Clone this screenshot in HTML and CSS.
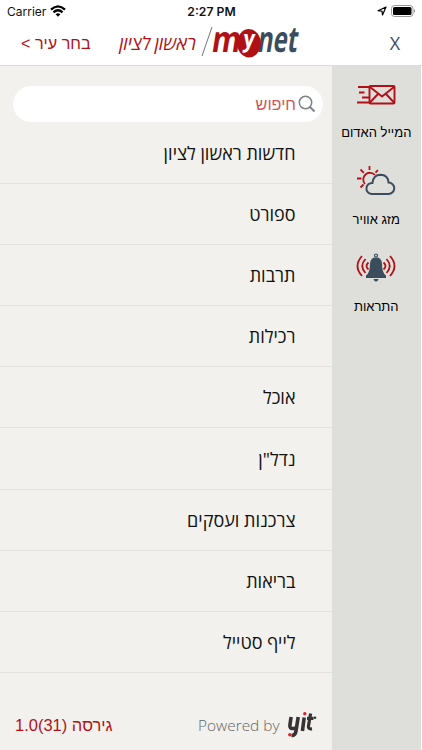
FILE: index.html
```html
<!DOCTYPE html>
<html lang="he" dir="rtl">
<head>
    <meta charset="UTF-8">
    <meta name="viewport" content="width=device-width, initial-scale=1.0">
    <title>mynet</title>
    <link rel="stylesheet" href="styles.css">
</head>
<body>
    <div class="status-bar" dir="ltr">
        <div class="carrier">
            <span>Carrier</span>
            <svg width="16" height="12" viewBox="0 0 16 12" fill="none" stroke="#000" stroke-width="2.3">
                <path d="M1 4.6Q8-1.8 15 4.6"/>
                <path d="M3.5 7.3Q8 3.3 12.5 7.3"/>
                <path d="M5.6 9.2Q8 7.2 10.4 9.2L8 11.7Z" fill="#000" stroke="none"/>
            </svg>
        </div>
        <div class="time">2:27 PM</div>
        <div class="indicators">
            <svg width="10" height="10" viewBox="0 0 10 10" fill="none" stroke="#000" stroke-width="1.2" stroke-linejoin="round">
                <path d="M9 1L1 4.7L5 5.1L5.5 9Z"/>
            </svg>
            <svg width="25" height="12" viewBox="0 0 25 12">
                <rect x=".5" y=".5" width="21.5" height="11" rx="3" fill="#fff" stroke="#999"/>
                <rect x="2" y="2" width="18.5" height="8" rx="1.5"/>
                <path d="M23 4Q25.3 6 23 8Z" fill="#999"/>
            </svg>
        </div>
    </div>

    <div class="header">
        <button class="close">X</button>
        <svg class="logo" width="98" height="44" viewBox="0 -4 98 44" direction="ltr">
            <path d="M1 30L11 1" stroke="#777" stroke-width="1"/>
            <g class="logo-text">
                <text transform="translate(9.5 26.2) skewX(-9)" fill="#b01116" textLength="29" lengthAdjust="spacingAndGlyphs">m</text>
                <text transform="translate(55.5 26.2) skewX(-9)" fill="#3b4d5d" textLength="40" lengthAdjust="spacingAndGlyphs">net</text>
                <ellipse cx="48" cy="17.3" rx="11.8" ry="14.2" fill="#b01116"/>
                <text class="logo-y" transform="translate(41.5 21.3) skewX(-7)" fill="#fff" textLength="11.5" lengthAdjust="spacingAndGlyphs">y</text>
            </g>
        </svg>
        <div class="city">ראשון לציון</div>
        <div class="choose-city">בחר עיר &gt;</div>
    </div>

    <div class="content">
        <div class="sidebar">
            <div class="side-item">
                <svg width="40" height="32" viewBox="0 0 40 32" fill="none" stroke="#b01116" stroke-width="1.9">
                    <rect x="13.5" y="7" width="25" height="17.5" rx="1"/>
                    <path d="M14 8L26 17.5L38 8M14 23.5L22 15M38 23.5L30 15M2 8H13M3 13.5H8.5M6 18.5H13M1 23.5H13"/>
                </svg>
                <span>המייל האדום</span>
            </div>
            <div class="side-item">
                <svg width="40" height="32" viewBox="0 0 40 32" fill="none" stroke-width="1.8">
                    <path stroke="#b01116" d="M9 18A6.3 6.3 0 1 1 19 9M13.5 4V0M1 12.5H5.5M4.5 3.5L7.8 6.8M22 4L19.5 6.7M4.5 21.5L7.5 18.5"/>
                    <path stroke="#3b4d5d" stroke-width="2" d="M15.5 28H32.5A5.7 5.7 0 0 0 32.5 16.5Q32 9 24.5 8.8Q17.5 8.8 16.4 17A5.5 5.5 0 0 0 15.5 28Z"/>
                </svg>
                <span>מזג אוויר</span>
            </div>
            <div class="side-item">
                <svg width="40" height="32" viewBox="0 0 40 32" fill="none" stroke="#b01116" stroke-width="1.8">
                    <path d="M6 3Q-3 13 6 23M9.5 6Q3 13 9.5 20M12.5 9.5Q8.5 13 12.5 16.5M34 3Q43 13 34 23M30.5 6Q37 13 30.5 20M27.5 9.5Q31.5 13 27.5 16.5"/>
                    <circle cx="20" cy="2.5" r="1.5" stroke="#3b4d5d" stroke-width="1.2"/>
                    <path fill="#3b4d5d" stroke="none" d="M18 4.5H22Q26 6 26 11Q26 20 30 22.5V25H10V22.5Q14 20 14 11Q14 6 18 4.5ZM17.5 26H22.5Q22 28.5 20 28.5T17.5 26Z"/>
                </svg>
                <span>התראות</span>
            </div>
        </div>

        <div class="main">
            <div class="search">
                <svg width="18" height="18" viewBox="0 0 18 18" fill="none" stroke="#7c8288" stroke-width="1.5">
                    <circle cx="7.5" cy="7.5" r="6.2"/>
                    <path d="M12 12L16.5 16.5" stroke-width="2"/>
                </svg>
                <span>חיפוש</span>
            </div>
            <ul class="menu">
                <li>חדשות ראשון לציון</li>
                <li>ספורט</li>
                <li>תרבות</li>
                <li>רכילות</li>
                <li>אוכל</li>
                <li>נדל"ן</li>
                <li>צרכנות ועסקים</li>
                <li>בריאות</li>
                <li>לייף סטייל</li>
            </ul>
            <div class="footer">
                <div class="powered" dir="ltr">
                    <span>Powered by</span>
                    <svg width="30" height="26" viewBox="0 0 30 26">
                        <g fill="none" stroke="#373234" stroke-width="3.6">
                            <path d="M4.1 5L2.9 13Q2.5 17 6 16.5L9.5 16M11.2 5L9 19Q8.4 23.5 4.5 23.5"/>
                            <path d="M17.2 5.5L15.4 19"/>
                            <path d="M23.6 1.5L21.4 14.5Q21 17.3 25 16.8M20 6.3H26.5" stroke-width="3.2"/>
                        </g>
                        <circle cx="17.8" cy="1.8" r="1.7" fill="#d9232e"/>
                        <circle cx="2.8" cy="22.8" r="1.7" fill="#d9232e"/>
                        <circle cx="28" cy="5.8" r="1.3" fill="#373234"/>
                    </svg>
                </div>
                <div class="version">גירסה <span dir="ltr">1.0(31)</span></div>
            </div>
        </div>
    </div>
</body>
</html>
```
FILE: styles.css
```css
* {
    box-sizing: border-box;
}

body {
    margin: 0;
    height: 750px;
    display: flex;
    flex-direction: column;
    font-family: "Open Sans", "Liberation Sans", sans-serif;
    background-color: #fff;
    color: #111;
    overflow: hidden;
}

svg {
    display: block;
    flex-shrink: 0;
}

.status-bar {
    height: 22px;
    padding: 0 6px 0 7px;
    display: grid;
    grid-template-columns: 1fr auto 1fr;
    align-items: center;
    font-family: Inter, sans-serif;
    font-size: 12px;
}

.carrier {
    display: flex;
    align-items: center;
    gap: 4px;
}

.time {
    font-weight: 600;
    font-size: 12.2px;
}

.indicators {
    display: flex;
    align-items: center;
    justify-content: flex-end;
    gap: 4px;
}

.header {
    height: 44px;
    padding: 0 21px;
    display: flex;
    align-items: center;
    border-bottom: 1px solid #dcdcda;
    color: #b01116;
}

.close {
    width: 12px;
    padding: 0 0 2px;
    border: none;
    background: none;
    font-family: "Open Sans", sans-serif;
    font-size: 18px;
    color: #3b4d5d;
}

.logo {
    margin-right: 90px;
    overflow: visible;
}

.logo-text {
    font-family: "Open Sans", sans-serif;
    font-size: 36px;
    font-weight: 700;
}

.logo-y {
    font-size: 24px;
}

.city {
    margin-right: 5px;
    padding-bottom: 2px;
    font-size: 18.3px;
    font-style: italic;
    white-space: nowrap;
}

.choose-city {
    margin-right: auto;
    font-family: "Liberation Sans", sans-serif;
    font-size: 16.2px;
    white-space: nowrap;
}

.content {
    flex: 1;
    display: flex;
    padding-right: 1px;
}

.sidebar {
    width: 89.5px;
    padding-top: 13px;
    background-color: #dedfdb;
}

.side-item {
    height: 87px;
    display: flex;
    flex-direction: column;
    align-items: center;
    gap: 14px;
    font-family: "Liberation Sans", sans-serif;
    font-size: 13px;
    color: #000;
}

.main {
    flex: 1;
    display: flex;
    flex-direction: column;
    padding-top: 20px;
    background-color: #f2f1ed;
}

.search {
    height: 36px;
    margin: 0 8.5px 1px 13px;
    padding: 0 7px;
    display: flex;
    align-items: center;
    gap: 2px;
    border-radius: 18px;
    background-color: #fff;
    font-family: "Liberation Sans", sans-serif;
    font-size: 16.2px;
    color: #cf5659;
}

.menu {
    list-style: none;
    margin: 0;
    padding: 0;
}

.menu li {
    height: 61.1px;
    padding: 0 36px;
    display: flex;
    align-items: center;
    border-bottom: 1px solid #e2e2df;
    font-size: 18px;
}

.footer {
    flex: 1;
    padding: 28px 15px 0 15px;
    display: flex;
    align-items: center;
    justify-content: space-between;
}

.powered {
    display: flex;
    align-items: center;
    gap: 7px;
    font-size: 15.4px;
    font-weight: 300;
    color: #666;
}

.version {
    font-family: "Liberation Sans", sans-serif;
    font-size: 16.5px;
    color: #b01116;
}
```
